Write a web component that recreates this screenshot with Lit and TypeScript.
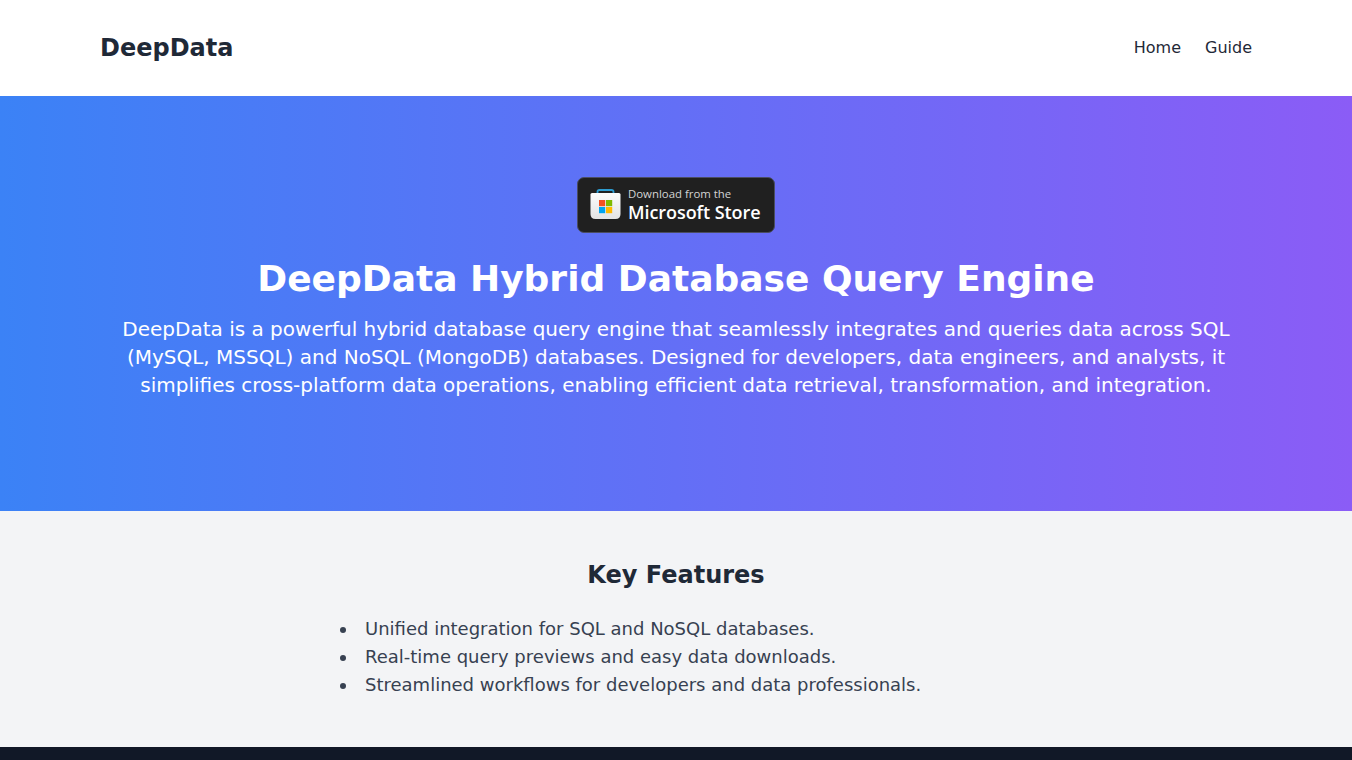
import { LitElement, html, css } from 'lit';
import { customElement } from 'lit/decorators.js';

const FEATURES = [
  'Unified integration for SQL and NoSQL databases.',
  'Real-time query previews and easy data downloads.',
  'Streamlined workflows for developers and data professionals.',
];

@customElement('app-root')
export class AppRoot extends LitElement {
  static styles = css`
    :host {
      display: flex;
      flex-direction: column;
      min-height: 760px;
      font-family: 'DejaVu Sans', sans-serif;
      background: #f3f4f6;
    }

    .header {
      display: flex;
      justify-content: space-between;
      align-items: center;
      height: 96px;
      padding: 0 100px;
      background: #ffffff;
    }

    .logo {
      font-size: 24px;
      line-height: 32px;
      font-weight: 700;
      color: #1f2937;
    }

    .nav {
      display: flex;
      gap: 24px;
    }

    .nav a {
      font-size: 16px;
      line-height: 24px;
      color: #1f2937;
      text-decoration: none;
    }

    .hero {
      display: flex;
      flex-direction: column;
      align-items: center;
      height: 415px;
      box-sizing: border-box;
      padding-top: 81px;
      background: linear-gradient(to right, #3b82f6, #8b5cf6);
      color: #ffffff;
      text-align: center;
    }

    .badge {
      display: flex;
      align-items: center;
      box-sizing: border-box;
      width: 198px;
      height: 56px;
      padding: 0 0 2px 12px;
      gap: 7px;
      background: #202020;
      border: 1px solid #4a4d63;
      border-radius: 7px;
      font-family: 'Open Sans', sans-serif;
      text-align: left;
    }

    .badge-text {
      display: flex;
      flex-direction: column;
      margin-top: 2px;
    }

    .badge-small {
      font-size: 11.4px;
      line-height: 14px;
      color: #d4d4d4;
    }

    .badge-big {
      font-size: 18px;
      line-height: 22px;
      font-weight: 600;
      letter-spacing: -0.07px;
      color: #ffffff;
    }

    h1 {
      margin: 26px 0 16px;
      font-size: 36px;
      line-height: 40px;
      font-weight: 700;
    }

    .lead {
      margin: 0;
      width: 1152px;
      font-size: 20px;
      line-height: 28px;
    }

    .features {
      display: flex;
      flex-direction: column;
      align-items: center;
      height: 236px;
      box-sizing: border-box;
      padding-top: 48px;
    }

    h2 {
      margin: 0 0 24px;
      font-size: 24px;
      line-height: 32px;
      font-weight: 700;
      color: #1f2937;
    }

    ul {
      margin: 0;
      padding: 0;
      width: 672px;
      list-style: disc inside;
      font-size: 18px;
      line-height: 28px;
      color: #374151;
    }

    .footer {
      flex: 1;
      background: #111827;
    }
  `;

  render() {
    return html`
      <header class="header">
        <div class="logo">DeepData</div>
        <nav class="nav">
          <a href="#">Home</a>
          <a href="#">Guide</a>
        </nav>
      </header>
      <section class="hero">
        <div class="badge">
          <svg width="31" height="30" viewBox="0 0 31 30">
            <defs>
              <linearGradient id="bag" x1="0" y1="0" x2="0" y2="1">
                <stop offset="0" stop-color="#fbfbfb" />
                <stop offset="1" stop-color="#e4e4e4" />
              </linearGradient>
            </defs>
            <path d="M7.5 5.5V2.8Q7.5 1 9.5 1H21.5Q23.5 1 23.5 2.8V5.5" fill="none" stroke="#2d9cd0" stroke-width="1.8" />
            <path d="M0.5 5.5Q0.5 4 2 4H29Q30.5 4 30.5 5.5V25Q30.5 30 25.5 30H5.5Q0.5 30 0.5 25Z" fill="url(#bag)" />
            <rect x="9" y="11" width="6.2" height="6.2" fill="#f25022" />
            <rect x="16" y="11" width="6.2" height="6.2" fill="#7fba00" />
            <rect x="9" y="18" width="6.2" height="6.2" fill="#00a4ef" />
            <rect x="16" y="18" width="6.2" height="6.2" fill="#ffb900" />
          </svg>
          <div class="badge-text">
            <span class="badge-small">Download from the</span>
            <span class="badge-big">Microsoft Store</span>
          </div>
        </div>
        <h1>DeepData Hybrid Database Query Engine</h1>
        <p class="lead">
          DeepData is a powerful hybrid database query engine that seamlessly integrates and queries data across SQL
          (MySQL, MSSQL) and NoSQL (MongoDB) databases. Designed for developers, data engineers, and analysts, it
          simplifies cross-platform data operations, enabling efficient data retrieval, transformation, and integration.
        </p>
      </section>
      <section class="features">
        <h2>Key Features</h2>
        <ul>
          ${FEATURES.map((f) => html`<li>${f}</li>`)}
        </ul>
      </section>
      <footer class="footer"></footer>
    `;
  }
}
